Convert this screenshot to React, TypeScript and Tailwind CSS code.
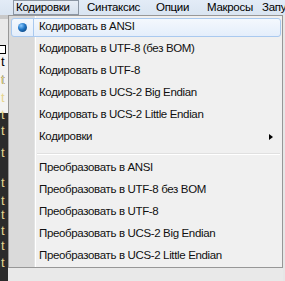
import React from 'react';

const encodeItems = [
  'Кодировать в ANSI',
  'Кодировать в UTF-8 (без BOM)',
  'Кодировать в UTF-8',
  'Кодировать в UCS-2 Big Endian',
  'Кодировать в UCS-2 Little Endian',
];

const convertItems = [
  'Преобразовать в ANSI',
  'Преобразовать в UTF-8 без BOM',
  'Преобразовать в UTF-8',
  'Преобразовать в UCS-2 Big Endian',
  'Преобразовать в UCS-2 Little Endian',
];

// lines of the editor window behind the menu (only a sliver is visible)
const bgMarks = [87, 105, 122, 138, 160, 190, 208, 222, 238, 253, 270];

function MenuRow({ label, checked, sub }: { label: string; checked?: boolean; sub?: boolean }) {
  return (
    <div className="relative flex h-[22px] items-center">
      {checked && (
        <div className="absolute left-[2px] right-[1px] top-[2px] bottom-[1px] flex rounded-[3px] border border-[#a9c9ef] bg-gradient-to-b from-[#f4f8fd] to-[#e4eefb]">
          <div className="flex w-[22px] items-center justify-center border-r border-[#a9c9ef]">
            <span className="h-[9px] w-[9px] rounded-full bg-[radial-gradient(circle_at_35%_30%,#8ccaff_0%,#1f74c4_45%,#0a3566_100%)]" />
          </div>
        </div>
      )}
      <span className="relative ml-[30px] text-[11.5px] leading-none tracking-[-0.35px] text-[#111]">{label}</span>
      {sub && (
        <span className="absolute right-[9px] top-[8px] h-0 w-0 border-y-[3.5px] border-l-[4px] border-y-transparent border-l-black" />
      )}
    </div>
  );
}

export default function App() {
  return (
    <div className="relative flex h-[281px] w-[285px] flex-col overflow-hidden bg-[#e9e9e9] font-['Liberation_Sans',sans-serif]">
      <div className="h-[8px] bg-gradient-to-b from-[#c3d3e6] to-[#d3dfec]" />
      <div className="flex h-[15px] items-center bg-gradient-to-b from-[#e3ecf7] to-[#d9e4f1] text-[11.5px] tracking-[-0.3px] text-black">
        <div className="ml-[13px] flex h-[15px] w-[66px] shrink-0 items-center border border-[#8c96a3] bg-gradient-to-b from-[#e8eef6] to-[#d6e0ec] pl-[2px]">
          Кодировки
        </div>
        <div className="ml-[8px] w-[69px] shrink-0">Синтаксис</div>
        <div className="w-[51px] shrink-0">Опции</div>
        <div className="w-[55px] shrink-0">Макросы</div>
        <div className="shrink-0 whitespace-nowrap">Запуск</div>
      </div>

      <div className="flex flex-1">
        <div className="relative w-[8px] shrink-0 overflow-hidden">
          <div className="h-[4px] bg-[#c9c9c9]" />
          <div className="h-[68px] bg-[#f3f3f3]">
            <div className="ml-[-4px] mt-[26px] h-[9px] w-[10px] border border-black bg-white" />
          </div>
          <div className="h-[181px] bg-[#2b2b2b]" />
          <span className="absolute left-[1px] top-[40px] text-[13px] leading-none text-black">t</span>
          <span className="absolute left-[1px] top-[58px] text-[13px] leading-none text-black">t</span>
          {bgMarks.map((y) => (
            <span
              key={y}
              className="absolute left-[1px] text-[13px] leading-none text-[#e6d58f]"
              style={{ top: y - 23 - 6 }}
            >
              t
            </span>
          ))}
        </div>

        <div className="flex h-[253px] w-[275px] shrink-0 flex-col border border-[#979797] bg-[#f0f0f0]">
          <div className="relative flex flex-1 flex-col">
            <div className="absolute bottom-0 left-0 top-0 w-[25px] bg-[#dadada]" />
            <div className="absolute bottom-0 left-[25px] top-0 w-px bg-[#e2e3e3]" />
            <div className="absolute bottom-0 left-[26px] top-0 w-px bg-white" />
            {encodeItems.map((t, i) => (
              <MenuRow key={t} label={t} checked={i === 0} />
            ))}
            <MenuRow label="Кодировки" sub />
            <div className="relative h-[9px]">
              <div className="absolute left-[28px] right-[2px] top-[5px] h-px bg-[#e0e0e0]" />
              <div className="absolute left-[28px] right-[2px] top-[6px] h-px bg-white" />
            </div>
            {convertItems.map((t) => (
              <MenuRow key={t} label={t} />
            ))}
          </div>
        </div>

        <div className="flex-1 bg-[#e6e6e6]" />
      </div>
      <div className="h-[5px] bg-[#2a2a2a]" />
    </div>
  );
}
